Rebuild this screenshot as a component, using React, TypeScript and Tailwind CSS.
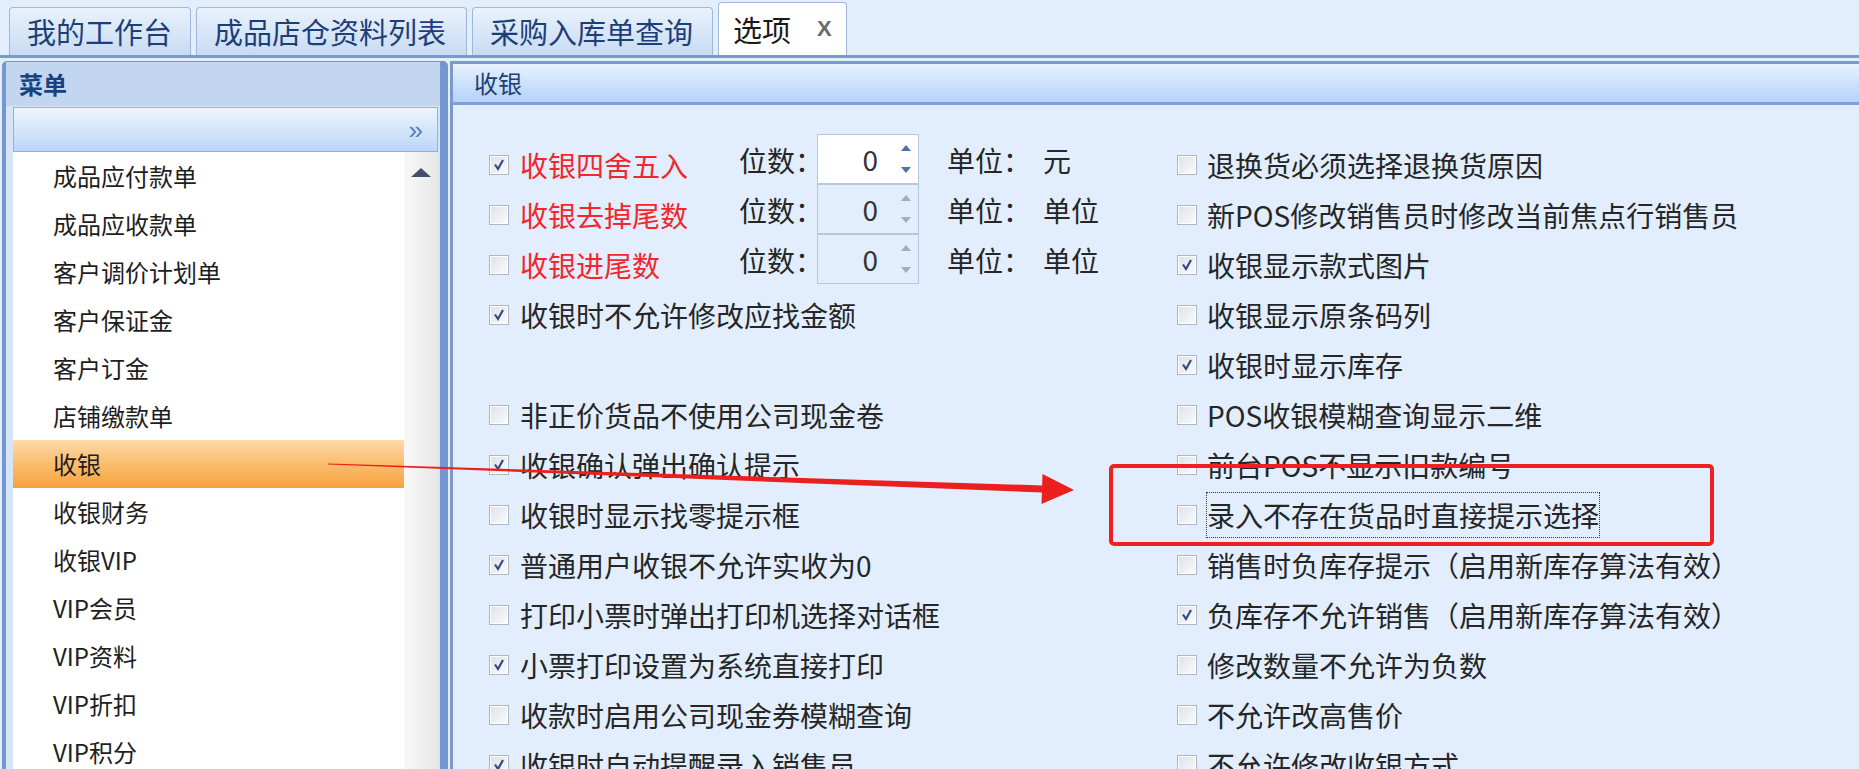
import React from 'react';

const menuItems = [
  '成品应付款单', '成品应收款单', '客户调价计划单', '客户保证金', '客户订金', '店铺缴款单',
  '收银', '收银财务', '收银VIP', 'VIP会员', 'VIP资料', 'VIP折扣', 'VIP积分',
];

type Opt = {
  label: string;
  checked: boolean;
  red?: boolean;
  spin?: { unit: string; active?: boolean };
  focus?: boolean;
} | null;

const leftOpts: Opt[] = [
  { label: '收银四舍五入', checked: true, red: true, spin: { unit: '元', active: true } },
  { label: '收银去掉尾数', checked: false, red: true, spin: { unit: '单位' } },
  { label: '收银进尾数', checked: false, red: true, spin: { unit: '单位' } },
  { label: '收银时不允许修改应找金额', checked: true },
  null,
  { label: '非正价货品不使用公司现金卷', checked: false },
  { label: '收银确认弹出确认提示', checked: true },
  { label: '收银时显示找零提示框', checked: false },
  { label: '普通用户收银不允许实收为0', checked: true },
  { label: '打印小票时弹出打印机选择对话框', checked: false },
  { label: '小票打印设置为系统直接打印', checked: true },
  { label: '收款时启用公司现金券模糊查询', checked: false },
  { label: '收银时自动提醒录入销售员', checked: true },
];

const rightOpts: Opt[] = [
  { label: '退换货必须选择退换货原因', checked: false },
  { label: '新POS修改销售员时修改当前焦点行销售员', checked: false },
  { label: '收银显示款式图片', checked: true },
  { label: '收银显示原条码列', checked: false },
  { label: '收银时显示库存', checked: true },
  { label: 'POS收银模糊查询显示二维', checked: false },
  { label: '前台POS不显示旧款编号', checked: false },
  { label: '录入不存在货品时直接提示选择', checked: false, focus: true },
  { label: '销售时负库存提示（启用新库存算法有效）', checked: false },
  { label: '负库存不允许销售（启用新库存算法有效）', checked: true },
  { label: '修改数量不允许为负数', checked: false },
  { label: '不允许改高售价', checked: false },
  { label: '不允许修改收银方式', checked: false },
];

function CheckBox({ checked }: { checked: boolean }) {
  return (
    <span className="w-[20px] h-[20px] shrink-0 border border-[#aeb6c2] bg-linear-to-br from-[#dde1e7] to-[#fbfcfd] shadow-[inset_0_0_0_1px_#ffffff] flex items-center justify-center">
      {checked && (
        <svg width="14" height="14" viewBox="0 0 14 14">
          <path d="M3 6.5 L6 11 L11 2" stroke="#2f4b7c" strokeWidth="2.2" fill="none" />
        </svg>
      )}
    </span>
  );
}

function SpinBox({ active }: { active?: boolean }) {
  const arrow = active ? '#4d72a8' : '#a3acb8';
  return (
    <div className={`w-[102px] h-[50px] -mt-[12px] border border-[#b3c7e3] flex items-center ${active ? 'bg-white' : 'bg-[#e3eefd]'}`}>
      <span className="flex-1 text-right pr-[16px] text-[28px] leading-none text-[#333]">0</span>
      <div className="w-[24px] h-full flex flex-col justify-between py-[10px] items-center">
        <svg width="10" height="6" viewBox="0 0 10 6"><path d="M0 6 L5 0 L10 6 Z" fill={arrow} /></svg>
        <svg width="10" height="6" viewBox="0 0 10 6"><path d="M0 0 L10 0 L5 6 Z" fill={arrow} /></svg>
      </div>
    </div>
  );
}

function OptionRow({ opt, gap }: { opt: Opt; gap: string }) {
  if (!opt) return <div className="h-[50px]" />;
  return (
    <div className="h-[50px] flex items-center">
      <div className={`flex items-center ${gap} ${opt.spin ? 'w-[250px]' : ''}`}>
        <CheckBox checked={opt.checked} />
        <span
          className={`text-[28px] leading-none whitespace-nowrap ${opt.red ? 'text-[#f2262b]' : 'text-[#262626]'} ${opt.focus ? 'border border-dotted border-[#3a3a3a] py-[8px] -ml-[1px]' : ''}`}
        >
          {opt.label}
        </span>
      </div>
      {opt.spin && (
        <div className="flex items-start">
          <span className="w-[78px] text-[28px] leading-none text-[#262626] whitespace-nowrap">位数：</span>
          <SpinBox active={opt.spin.active} />
          <span className="ml-[28px] w-[96px] text-[28px] leading-none text-[#262626] whitespace-nowrap">单位：</span>
          <span className="text-[28px] leading-none text-[#262626]">{opt.spin.unit}</span>
        </div>
      )}
    </div>
  );
}

const tabs = [
  { label: '我的工作台', w: 'w-[182px]' },
  { label: '成品店仓资料列表', w: 'w-[271px]' },
  { label: '采购入库单查询', w: 'w-[241px]' },
];

export default function App() {
  return (
    <div className="w-[1859px] h-[769px] overflow-hidden relative bg-[#e3eefd] font-['Microsoft_YaHei','Noto_Sans_CJK_SC',sans-serif]">
      {/* Tab strip */}
      <div className="h-[58px] flex items-end gap-[5px] pl-[9px] border-b-[3px] border-[#7c99c9]">
        {tabs.map(t => (
          <div
            key={t.label}
            className={`${t.w} h-[48px] rounded-t-[4px] border border-b-0 border-[#9fb7da] bg-linear-to-b from-[#eaf2fd] to-[#c8dbf3] flex items-center pl-[17px] text-[29px] leading-none text-[#1d3f78] whitespace-nowrap`}
          >
            {t.label}
          </div>
        ))}
        <div className="w-[129px] h-[53px] rounded-t-[4px] border border-b-0 border-[#9fb7da] bg-white flex items-center pl-[14px] text-[29px] leading-none text-[#1a1a1a]">
          选项
          <span className="ml-[26px] text-[22px] font-bold text-[#6b6b6b] font-['Liberation_Sans',sans-serif]">X</span>
        </div>
      </div>

      {/* Main area */}
      <div className="flex pt-[3px] h-[711px]">
        {/* Left menu panel */}
        <div className="ml-[2px] w-[446px] flex flex-col border-l-[4px] border-r-[8px] border-t border-[#7597cf] rounded-t-[5px] bg-[#d6e4f7]">
          <div className="h-[44px] shrink-0 bg-[#c3d6ef] flex items-center pl-[13px] text-[24px] font-bold leading-none text-[#17417f]">
            菜单
          </div>
          <div className="flex-1 min-h-0 flex flex-col pl-[7px] pr-[2px] pt-[1px]">
            <div className="h-[45px] shrink-0 border border-[#8db1e2] bg-linear-to-b from-[#edf5fe] to-[#bcd6f8] flex items-center justify-end pr-[14px]">
              <span className="text-[26px] leading-none text-[#5a7fb8] font-['Liberation_Sans',sans-serif]">»</span>
            </div>
            <div className="flex-1 min-h-0 flex">
              <div className="flex-1 bg-white flex flex-col">
                {menuItems.map(m => (
                  <div
                    key={m}
                    className={`h-[48px] shrink-0 flex items-center pl-[40px] text-[24px] leading-none text-[#1e1e1e] ${m === '收银' ? 'bg-linear-to-b from-[#fedaa8] via-[#fbbd6c] to-[#f6a23c]' : ''}`}
                  >
                    {m}
                  </div>
                ))}
              </div>
              <div className="w-[34px] bg-linear-to-r from-[#f8f8f8] to-[#e8e8e8] flex justify-center pt-[16px]">
                <svg width="20" height="9" viewBox="0 0 20 9"><path d="M0 9 L10 0 L20 9 Z" fill="#414f6b" /></svg>
              </div>
            </div>
          </div>
        </div>

        {/* Content panel */}
        <div className="ml-[2px] flex-1 flex flex-col border-t-[3px] border-l-[3px] border-[#7b99cb]">
          <div className="h-[41px] shrink-0 bg-linear-to-b from-[#e8f2fe] to-[#b4d2fa] border-b-[3px] border-[#809fd3] flex items-center pl-[21px] text-[24px] leading-none text-[#1b3f76]">
            收银
          </div>
          <div className="flex-1 bg-[#e2eefd] pt-[35px] pl-[36px] grid grid-cols-[688px_1fr]">
            <div className="flex flex-col">
              {leftOpts.map((o, i) => <OptionRow key={i} opt={o} gap="gap-[11px]" />)}
            </div>
            <div className="flex flex-col">
              {rightOpts.map((o, i) => <OptionRow key={i} opt={o} gap="gap-[10px]" />)}
            </div>
          </div>
        </div>
      </div>

      {/* Annotation: red box and arrow */}
      <div className="absolute left-[1109px] top-[464px] w-[605px] h-[82px] border-[4px] border-[#ee2020] rounded-[5px] pointer-events-none" />
      <svg className="absolute left-0 top-0 pointer-events-none" width="1859" height="769" viewBox="0 0 1859 769">
        <polygon
          points="328,463.5 1042.1,485.4 1042.5,473.9 1074,490 1041.5,503.9 1041.9,492.4 328,464.5"
          fill="#ec1f1f"
        />
      </svg>
    </div>
  );
}
